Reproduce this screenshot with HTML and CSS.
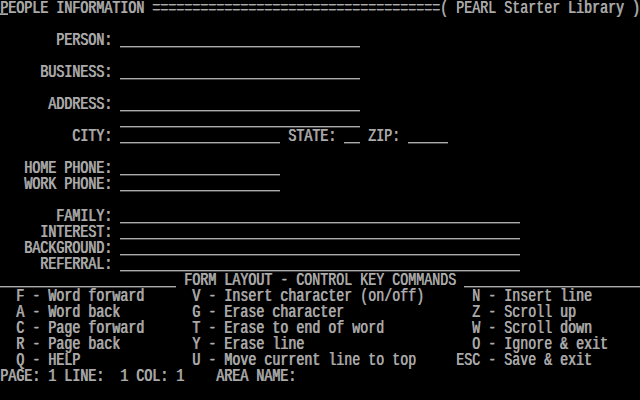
FILE: index.html
```html
<!DOCTYPE html>
<html lang="en">
<head>
    <meta charset="UTF-8">
    <meta name="viewport" content="width=device-width, initial-scale=1.0">
    <title>PEARL - People Information</title>
    <link rel="stylesheet" href="styles.css">
</head>
<body>
    <div class="screen">
        <div class="row"><span class="text"><span class="cursor">P</span>EOPLE INFORMATION ====================================( PEARL Starter Library )</span></div>
        <div class="row"></div>
        <div class="row"><span class="text">       PERSON: <span class="field w30"></span></span></div>
        <div class="row"></div>
        <div class="row"><span class="text">     BUSINESS: <span class="field w30"></span></span></div>
        <div class="row"></div>
        <div class="row"><span class="text">      ADDRESS: <span class="field w30"></span></span></div>
        <div class="row"><span class="text">               <span class="field w30"></span></span></div>
        <div class="row"><span class="text">         CITY: <span class="field w20"></span> STATE: <span class="field w2"></span> ZIP: <span class="field w5"></span></span></div>
        <div class="row"></div>
        <div class="row"><span class="text">   HOME PHONE: <span class="field w20"></span></span></div>
        <div class="row"><span class="text">   WORK PHONE: <span class="field w20"></span></span></div>
        <div class="row"></div>
        <div class="row"><span class="text">       FAMILY: <span class="field w50"></span></span></div>
        <div class="row"><span class="text">     INTEREST: <span class="field w50"></span></span></div>
        <div class="row"><span class="text">   BACKGROUND: <span class="field w50"></span></span></div>
        <div class="row"><span class="text">     REFERRAL: <span class="field w50"></span></span></div>
        <div class="row"><span class="text"><span class="field w22"></span> FORM LAYOUT - CONTROL KEY COMMANDS <span class="field w22"></span></span></div>
        <div class="row"><span class="text">  F - Word forward      V - Insert character (on/off)      N - Insert line</span></div>
        <div class="row"><span class="text">  A - Word back         G - Erase character                Z - Scroll up</span></div>
        <div class="row"><span class="text">  C - Page forward      T - Erase to end of word           W - Scroll down</span></div>
        <div class="row"><span class="text">  R - Page back         Y - Erase line                     O - Ignore &amp; exit</span></div>
        <div class="row"><span class="text">  Q - HELP              U - Move current line to top     ESC - Save &amp; exit</span></div>
        <div class="row"><span class="text">PAGE: 1 LINE:  1 COL: 1    AREA NAME:</span></div>
        <div class="row"></div>
    </div>
</body>
</html>
```

FILE: styles.css
```css
body {
    margin: 0;
    background: #000000;
    overflow: hidden;
}
/* 80x25 text screen: 8px cells, 16px rows */
.screen {
    width: 640px;
    height: 400px;
    font-family: "Liberation Mono", monospace;
    font-size: 13.3333px;
    line-height: 16px;
    color: #aaaaaa;
}
.row {
    height: 16px;
}
/* the old screen font is tall and narrow, so stretch each line */
.text {
    display: inline-block;
    vertical-align: top;
    height: 11.4286px;
    line-height: 11.4286px;
    white-space: pre;
    text-shadow: 0.7px 0 0 #aaaaaa;
    transform: scaleY(1.4);
    transform-origin: 0 0;
}
.field {
    display: inline-block;
    vertical-align: top;
    height: 10px;
    border-bottom: 1px solid #aaaaaa;
}
.w2 { width: 2ch; }
.w5 { width: 5ch; }
.w20 { width: 20ch; }
.w22 { width: 22ch; }
.w30 { width: 30ch; }
.w50 { width: 50ch; }
.cursor {
    display: inline-block;
    vertical-align: top;
    height: 10.7px;
    box-shadow: inset 0 -1.5px #aaaaaa;
}
```
